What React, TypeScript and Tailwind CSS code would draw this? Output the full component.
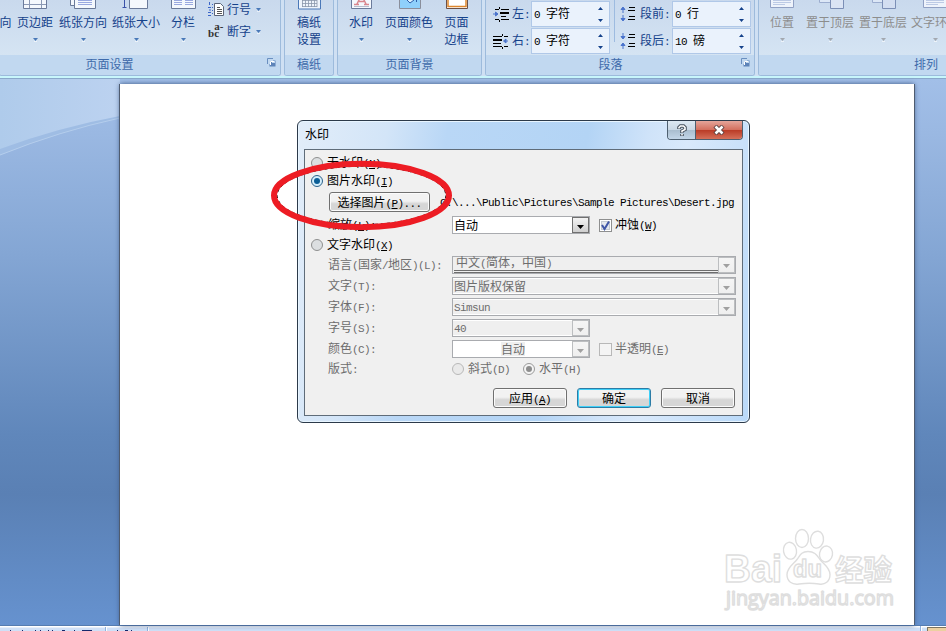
import { Fragment } from 'react'
import clsx from 'clsx'

const CJK = "font-['Liberation_Sans','Noto_Sans_CJK_SC',sans-serif]"

interface TxtProps {
  children: string
  hot?: string
}

function Txt({ children, hot }: TxtProps) {
  const runs = children.split(/([\x20-\x7e]+)/).filter(Boolean)
  return (
    <span className="inline-block whitespace-pre pt-px">
      {runs.map((run, i) =>
        /^[\x20-\x7e]/.test(run) ? (
          <span key={i} className="font-['Liberation_Mono',monospace] text-[11px] tracking-[-0.6px]">
            {hot && run.includes(hot)
              ? run.split(hot).map((part, j) => (
                  <Fragment key={j}>
                    {j > 0 && <span className="underline underline-offset-1">{hot}</span>}
                    {part}
                  </Fragment>
                ))
              : run}
          </span>
        ) : (
          <Fragment key={i}>{run}</Fragment>
        )
      )}
    </span>
  )
}

//-----------Ribbon--------------------------------------------------------

function Caret({ color = '#4878b8' }: { color?: string }) {
  return (
    <svg width="5" height="4" viewBox="0 0 5 4" className="shrink-0">
      <path d="M0 0h5L2.500 3z" fill={color} />
      <path d="M1 3.500h3" stroke="#fff" strokeWidth="0.6" />
    </svg>
  )
}

type IconKind =
  | 'none' | 'margins' | 'orient' | 'size' | 'columns' | 'grid'
  | 'watermark' | 'color' | 'border' | 'pos' | 'front' | 'back'

function RibbonIcon({ kind }: { kind: IconKind }) {
  const page = { fill: '#f4f8fd', stroke: '#6b7b9b' }
  return (
    <svg width="32" height="10" viewBox="0 0 32 10" className="shrink-0">
      {kind === 'margins' && (
        <>
          <path d="M4.500-2v10.500h23v-10.500z" {...page} />
          <path d="M10.500 0v8M22.500 0v8M5 4.500h22" stroke="#8b99b5" />
        </>
      )}
      {kind === 'orient' && (
        <>
          <path d="M3.500-2v7.500h8v-7.500z" {...page} />
          <path d="M7.500-2v10.500h21v-10.500z" {...page} />
          <path d="M11 .5h14M11 2.500h14M11 4.500h14" stroke="#9aa9e0" />
        </>
      )}
      {kind === 'size' && (
        <>
          <path d="M9.500-2v10.500h18v-10.500z" {...page} />
          <path d="M4.500 0v7M2.500 7.500h4" stroke="#3951a8" />
        </>
      )}
      {kind === 'columns' && (
        <>
          <path d="M4.500-2v10.500h24v-10.500z" {...page} />
          <path d="M7 .5h8M18 .5h8M7 2.500h8M18 2.500h8M7 4.500h8M18 4.500h8" stroke="#9aa9e0" />
        </>
      )}
      {kind === 'grid' && (
        <>
          <path d="M5.500-2v11h22v-11z" fill="#eef4fc" stroke="#4a78b8" />
          <path d="M9 .5h15M9 3.500h15M9 6.500h15M9.500 0v7M12.500 0v7M15.500 0v7M18.500 0v7M21.500 0v7M24 0v7" stroke="#8a97ab" strokeWidth=".8" />
        </>
      )}
      {kind === 'watermark' && (
        <>
          <path d="M6.500-2v10.500h20v-10.500z" {...page} />
          <path d="M9 4.500h5M19 4.500h5M12 4l2.500-5M14 1.500h5M18.500-1L21 4" stroke="#d9878e" strokeWidth="1.500" fill="none" />
          <path d="M9 6.500h15" stroke="#b6bccb" />
        </>
      )}
      {kind === 'color' && (
        <>
          <path d="M6.500-2v10.500h21v-10.500z" fill="#8fd0fb" stroke="#8a8f9c" />
          <path d="M14 0l3 3 4-3M23.500 0v2" fill="#d5efff" stroke="#2d5da8" />
        </>
      )}
      {kind === 'border' && (
        <>
          <path d="M5.500-2v10.500h21v-10.500z" fill="#fff" stroke="#6c5148" />
          <path d="M7-2v8.500h18v-8.500z" fill="#fff" stroke="#dd862c" strokeWidth="1.500" />
        </>
      )}
      {kind === 'pos' && (
        <>
          <path d="M4.500-2v9.500h23v-9.500z" fill="#eef3fb" stroke="#91a1c4" />
          <path d="M7 .5h18M7 2.500h18M7 4.500h12" stroke="#bccae5" />
        </>
      )}
      {kind === 'front' && (
        <>
          <path d="M5.500-2v4.500h15v-4.500z" fill="#dce7f6" stroke="#9cadcf" />
          <path d="M16.500-2v10.500h13v-10.500z" fill="#dbe4f4" stroke="#7c8fb6" />
        </>
      )}
      {kind === 'back' && (
        <>
          <path d="M5.500-2v4.500h10v-4.500z" fill="#dce7f6" stroke="#9cadcf" />
          <path d="M15.500-2v10.500h13v-10.500z" fill="#d3def1" stroke="#7c8fb6" />
        </>
      )}
    </svg>
  )
}

interface BigButtonProps {
  width: string
  icon: IconKind
  label: string
  second?: string
  disabled?: boolean
  caret?: boolean
}

function BigButton({ width, icon, label, second, disabled, caret = true }: BigButtonProps) {
  return (
    <div className={clsx('flex shrink-0 flex-col items-center', width, disabled ? 'text-[#8d8d8d]' : 'text-[#15428b]')}>
      <RibbonIcon kind={icon} />
      <span className="mt-[5px] h-[17px] whitespace-nowrap leading-[17px]">{label}</span>
      {second && <span className="whitespace-nowrap leading-[17px]">{second}</span>}
      {!second && caret && (
        <span className="mt-[6px] flex">
          <Caret color={disabled ? '#a3a8b0' : undefined} />
        </span>
      )}
    </div>
  )
}

interface GroupProps {
  width: string
  title: string
  launcher?: boolean
  titleShift?: string
  children: React.ReactNode
}

function Group({ width, title, launcher, titleShift, children }: GroupProps) {
  return (
    <section className={clsx('flex h-[76px] shrink-0 flex-col overflow-hidden rounded-b-[3px] border border-t-0 border-[#9dbbdc] bg-gradient-to-b from-[#c9d9ed] to-[#d9e8f5]', width)}>
      <div className="flex h-[55px] shrink-0">{children}</div>
      <div className="flex flex-1 items-center bg-[#c1d8f0] text-[#3e6aaa]">
        <span className={clsx('flex-1 text-center', titleShift)}>{title}</span>
        {launcher && (
          <svg width="9" height="9" viewBox="0 0 9 9" className="-mt-[6px] mr-1">
            <path d="M.5 6V.5H6" fill="none" stroke="#6a8fc0" />
            <path d="M3 3h2v2h3V3h-2V2.500h2.500v6h-6V6H3z" fill="#5d83b8" />
            <path d="M3.500 7V3.500H7" stroke="#fff" fill="none" />
          </svg>
        )}
      </div>
    </section>
  )
}

function Spinner({ value }: { value: string }) {
  return (
    <div className="flex h-[26px] w-[79px] items-center justify-between border border-[#b0c8e8] bg-[#eaf2fc] pl-[2px] pr-[6px] text-black">
      <Txt>{value}</Txt>
      <svg width="5" height="15" viewBox="0 0 5 15">
        <path d="M0 3h5L2.500 0zM0 12h5l-2.500 3z" fill="#15428b" />
      </svg>
    </div>
  )
}

function IndentIcon({ right }: { right?: boolean }) {
  return (
    <svg width="16" height="15" viewBox="0 0 16 15" className="shrink-0">
      {right ? (
        <>
          <path d="M0 2.500h9M0 9.500h8M0 12.500h9M11 12.500h4M11 2.500h4" stroke="#000" />
          <path d="M0 6h9" stroke="#000" strokeWidth="2" />
          <path d="M9.500 0v2M9.500 13v2" stroke="#000" />
          <path d="M15 7h-3M13 5L10.500 7 13 9z" fill="#4b74cd" stroke="#4b74cd" />
        </>
      ) : (
        <>
          <path d="M2 2.500h4M8 2.500h8M8 9.500h5M2 12.500h4M8 12.500h8" stroke="#000" />
          <path d="M7 6h9" stroke="#000" strokeWidth="2" />
          <path d="M6.500 0v2M6.500 13v2" stroke="#000" />
          <path d="M0 7h3M2.500 5L5 7 2.500 9z" fill="#4b74cd" stroke="#4b74cd" />
        </>
      )}
    </svg>
  )
}

function SpacingIcon({ after }: { after?: boolean }) {
  return (
    <svg width="16" height="16" viewBox="0 0 16 16" className="shrink-0">
      <path d="M9 1.500h6M8 4.500h7M9 10.500h6M8 13.500h7" stroke="#000" />
      {after ? (
        <path d="M3 0v3M1 3.500L3 6l2-2.500zM3 13v3M1 12.500L3 10l2 2.500z" fill="#4b74cd" stroke="#4b74cd" />
      ) : (
        <path d="M3 3v4M1 3.500L3 1l2 2.500zM3 9v4M1 12.500L3 15l2-2.500z" fill="#4b74cd" stroke="#4b74cd" />
      )}
    </svg>
  )
}

function Ribbon() {
  return (
    <header className="flex h-[79px] shrink-0 flex-col overflow-hidden bg-[#cfe0f3]">
      <div className="flex h-[76px] gap-[3px]">
        <Group width="w-[282px] -ml-px" title="页面设置" launcher titleShift="-ml-[48px]">
          <BigButton width="w-[11px] overflow-hidden" icon="none" label="向" caret={false} />
          <BigButton width="w-12" icon="margins" label="页边距" />
          <BigButton width="w-12" icon="orient" label="纸张方向" />
          <BigButton width="w-[58px]" icon="size" label="纸张大小" />
          <BigButton width="w-9" icon="columns" label="分栏" />
          <div className="flex flex-col pl-[7px] text-[#15428b]">
            <div className="flex h-[19px] items-center">
              <svg width="17" height="15" viewBox="0 0 17 15" className="mr-[2px]">
                <path d="M6.500 1.500h6l3 3v9h-9z" fill="#fff" stroke="#5b6478" />
                <path d="M9 5.500h3M9 7.500h5M9 9.500h5M9 11.500h5" stroke="#555" />
                <path d="M1.500 0v3M0 5.500h3M1 8h2M0 10.500h3M0 13.500h3" stroke="#3a64c8" />
                <path d="M4.500 2v12" stroke="#3a64c8" strokeDasharray="1 2" />
              </svg>
              行号
              <span className="ml-[5px] flex"><Caret /></span>
            </div>
            <div className="flex h-[25px] items-center">
              <span className="mr-[2px] flex h-[13px] w-[17px] items-end font-['Liberation_Serif',serif] text-[11px] font-bold text-[#333]">
                <span className="leading-[9px]">b</span>
                <span className="flex flex-col text-[11px] leading-[6px]">
                  <span>a-</span>
                  <span className="leading-[9px]">c</span>
                </span>
              </span>
              断字
              <span className="ml-[5px] flex"><Caret /></span>
            </div>
          </div>
        </Group>
        <Group width="w-[50px]" title="稿纸">
          <BigButton width="w-12" icon="grid" label="稿纸" second="设置" />
        </Group>
        <Group width="w-[145px]" title="页面背景">
          <BigButton width="w-[46px]" icon="watermark" label="水印" />
          <BigButton width="w-[50px]" icon="color" label="页面颜色" />
          <BigButton width="w-[45px]" icon="border" label="页面" second="边框" />
        </Group>
        <Group width="w-[270px]" title="段落" launcher titleShift="-ml-[6px]">
          <div className="grid h-[54px] grid-cols-[19px_19px_80px] content-start items-center gap-y-px pl-[7px] pt-px text-[#15428b]">
            <IndentIcon />
            <Txt>左:</Txt>
            <Spinner value="0 字符" />
            <IndentIcon right />
            <Txt>右:</Txt>
            <Spinner value="0 字符" />
          </div>
          <div className="ml-[3px] h-[42px] w-px bg-[#9dbbe0]" />
          <div className="grid h-[54px] grid-cols-[20px_32px_79px] content-start items-center gap-y-px pl-[5px] pt-px text-[#15428b]">
            <SpacingIcon />
            <Txt>段前:</Txt>
            <Spinner value="0 行" />
            <SpacingIcon after />
            <Txt>段后:</Txt>
            <Spinner value="10 磅" />
          </div>
        </Group>
        <Group width="w-[336px]" title="排列">
          <BigButton width="w-[46px]" icon="pos" label="位置" disabled />
          <BigButton width="w-[50px]" icon="front" label="置于顶层" disabled />
          <BigButton width="w-[56px]" icon="back" label="置于底层" disabled />
          <BigButton width="w-[48px]" icon="pos" label="文字环绕" disabled />
        </Group>
      </div>
      <div className="h-[2px] bg-[#c8f6fb]" />
      <div className="h-px bg-[#8aa8ca]" />
    </header>
  )
}

//-----------Dialog--------------------------------------------------------

function Radio({ on, disabled }: { on?: boolean; disabled?: boolean }) {
  return (
    <span className={clsx('flex size-3 shrink-0 items-center justify-center rounded-full border', on && !disabled ? 'border-[#2c628b] bg-[#d4eefb]' : disabled ? (on ? 'border-[#9a9a9a] bg-[#f4f4f4]' : 'border-[#b8b8b8] bg-[#e9e9e9]') : 'border-[#8e8f8f] bg-[#dcdfe1]')}>
      {on && <span className={clsx('size-1.5 rounded-full', disabled ? 'bg-[#8d8d8d]' : 'bg-[#0b5e96]')} />}
    </span>
  )
}

interface ComboProps {
  wide?: boolean
  value: string
  enabled?: boolean
  variant?: 'link' | 'center'
}

function Combo({ wide, value, enabled, variant }: ComboProps) {
  return (
    <div className={clsx('flex h-[18px] shrink-0 border border-[#a9abaf]', wide ? 'w-[284px]' : 'w-[138px]', enabled ? 'bg-white text-black' : 'bg-[#efefef] text-[#6d6d6d]', variant === 'center' && 'bg-white')}>
      <div className={clsx('flex min-w-0 flex-1 items-center pl-px', !enabled && !variant && 'border-y border-white', variant === 'center' && 'justify-center')}>
        {variant === 'link' ? (
          <span className="flex h-4 w-full items-center border-b-[3px] border-double border-[#6d6d6d] pl-[2px]">
            <Txt>{value}</Txt>
          </span>
        ) : variant === 'center' ? (
          <span className="flex h-[14px] items-center bg-[#efefef]"><Txt>{value}</Txt></span>
        ) : (
          <Txt>{value}</Txt>
        )}
      </div>
      <div className={clsx('flex w-[17px] items-center justify-center border bg-gradient-to-b', enabled ? 'border-[#707070] from-[#f3f3f3] to-[#cfcfcf]' : 'border-[#bcbec0] from-[#f5f5f5] to-[#efefef]')}>
        <svg width="7" height="4" viewBox="0 0 7 4" className="mt-[3px]">
          <path d="M0 0h7L3.500 4z" fill={enabled ? '#000' : '#a0a0a0'} />
        </svg>
      </div>
    </div>
  )
}

function PushButton({ label, hot, primary, width = 'w-[74px]' }: { label: string; hot?: string; primary?: boolean; width?: string }) {
  return (
    <button className={clsx('flex h-5 shrink-0 items-center justify-center rounded-[3px] border bg-gradient-to-b from-[#f2f2f2] from-45% to-[#d6d6d6] to-60% pt-px text-black', width, primary ? 'border-[#2c7ca6] shadow-[inset_0_0_0_1px_#3fd0f8]' : 'border-[#707070] shadow-[inset_0_0_0_1px_#fbfbfb]')}>
      <Txt hot={hot}>{label}</Txt>
    </button>
  )
}

function RadioRow({ height, label, hot, on }: { height: string; label: string; hot: string; on?: boolean }) {
  return (
    <div className={clsx('flex items-center gap-1 pl-[6px]', height)}>
      <Radio on={on} />
      <Txt hot={hot}>{label}</Txt>
    </div>
  )
}

function FieldRow({ height, label, children }: { height: string; label: string; children: React.ReactNode }) {
  return (
    <div className={clsx('flex items-center text-[#6d6d6d]', height)}>
      <div className="w-[147px] shrink-0 pl-[23px]"><Txt>{label}</Txt></div>
      {children}
    </div>
  )
}

function Checkbox({ checked }: { checked?: boolean }) {
  return (
    <svg width="13" height="13" viewBox="0 0 13 13" className="ml-[9px] mr-[3px] shrink-0">
      <rect x=".5" y=".5" width="12" height="12" fill={checked ? '#fff' : '#f4f4f4'} stroke={checked ? '#8e8f8f' : '#b8b8b8'} />
      {checked && <rect x="2.500" y="2.500" width="8" height="8" fill="#e4e8ee" stroke="#c4cad2" />}
      {checked && <path d="M3 6l2.500 4L10 2.500" fill="none" stroke="#3f56a6" strokeWidth="2" />}
    </svg>
  )
}

function WatermarkDialog() {
  return (
    <div className="absolute left-[297px] top-[120px] flex h-[303px] w-[453px] flex-col rounded-[6px] border border-[#2c3a4a] bg-[linear-gradient(100deg,#e2edf9_0%,#d3e5f8_18%,#b9d7f6_30%,#b3d4f5_58%,#cfe3f9_70%,#d9e9fb_78%,#b9d9f9_100%)] shadow-[inset_0_0_0_1px_#e8f5ff]">
      <div className="flex h-[28px] shrink-0 justify-between">
        <span className="pl-[7px] pt-[6px] text-black">水印</span>
        <div className="mr-[6px] flex h-[19px] overflow-hidden rounded-b-[4px] border border-t-0 border-[#4e6070]">
          <div className="flex w-7 items-center justify-center border-r border-[#4e6070] bg-[linear-gradient(#dde8f2_0%,#cad8e5_48%,#a9bdce_50%,#c3d6e8_100%)]">
            <svg width="10" height="13" viewBox="0 0 10 13" fill="none">
              <path d="M2 5V3.500L3.500 2h3L8 3.500v2L5 7v2M5 10v2" stroke="#46505c" strokeWidth="3.600" />
              <path d="M2 4.500V3.500L3.500 2h3L8 3.500v2L5 7v1.500M5 10v1.500" stroke="#fff" strokeWidth="1.600" />
            </svg>
          </div>
          <div className="flex w-[46px] items-center justify-center bg-[linear-gradient(#e5a59a_0%,#d4705f_48%,#b93a25_50%,#d5705a_100%)]">
            <svg width="12" height="10" viewBox="0 0 12 10" fill="none">
              <path d="M2 1l8 8M10 1L2 9" stroke="#5a4040" strokeWidth="4.400" />
              <path d="M2.500 1.500l7 7M9.500 1.500l-7 7" stroke="#fff" strokeWidth="2.600" />
            </svg>
          </div>
        </div>
      </div>
      <div className="mx-[6px] h-[267px] border border-[#5f6c79] bg-[#f0f0f0] pt-1 text-black">
        <RadioRow height="h-[18px]" label="无水印(N)" hot="N" />
        <RadioRow height="h-[18px]" label="图片水印(I)" hot="I" on />
        <div className="flex h-6 items-center pl-6">
          <PushButton width="w-[101px]" label="选择图片(P)..." hot="P" />
          <span className="ml-[10px]"><Txt>{'C:\\...\\Public\\Pictures\\Sample Pictures\\Desert.jpg'}</Txt></span>
        </div>
        <div className="flex h-[22px] items-center">
          <div className="w-[147px] shrink-0 pl-[23px]"><Txt hot="L">缩放(L):</Txt></div>
          <Combo value="自动" enabled />
          <Checkbox checked />
          <Txt hot="W">冲蚀(W)</Txt>
        </div>
        <RadioRow height="h-[18px]" label="文字水印(X)" hot="X" />
        <FieldRow height="h-[21px]" label="语言(国家/地区)(L):">
          <Combo wide value="中文(简体，中国)" variant="link" />
        </FieldRow>
        <FieldRow height="h-[22px]" label="文字(T):">
          <Combo wide value="图片版权保留" />
        </FieldRow>
        <FieldRow height="h-5" label="字体(F):">
          <Combo wide value="Simsun" />
        </FieldRow>
        <FieldRow height="h-[22px]" label="字号(S):">
          <Combo value="40" />
        </FieldRow>
        <FieldRow height="h-5" label="颜色(C):">
          <Combo value="自动" variant="center" />
          <Checkbox />
          <Txt hot="E">半透明(E)</Txt>
        </FieldRow>
        <FieldRow height="h-5" label="版式:">
          <span className="flex items-center gap-1">
            <Radio disabled />
            <Txt>斜式(D)</Txt>
            <span className="w-[5px]" />
            <Radio on disabled />
            <Txt>水平(H)</Txt>
          </span>
        </FieldRow>
        <div className="mr-[7px] mt-[9px] flex justify-end gap-[10px]">
          <PushButton label="应用(A)" hot="A" />
          <PushButton label="确定" primary />
          <PushButton label="取消" />
        </div>
      </div>
    </div>
  )
}

//-----------Workspace--------------------------------------------------------

function BaiduMark() {
  return (
    <svg width="180" height="86" viewBox="0 0 180 86" className="absolute left-[720px] top-[526px]" fill="#fff" stroke="#dedede" strokeWidth="1.400" strokeLinejoin="round">
      <text x="4" y="56" fontSize="39" fontWeight="700" textLength="58" lengthAdjust="spacingAndGlyphs" fontFamily="Liberation Sans, sans-serif">Bai</text>
      <ellipse cx="70" cy="24.700" rx="6.500" ry="8.500" transform="rotate(-10 70 24.700)" />
      <ellipse cx="82" cy="12.500" rx="6.500" ry="9" />
      <ellipse cx="97" cy="13.700" rx="6.500" ry="8.500" transform="rotate(8 97 13.700)" />
      <ellipse cx="106" cy="28" rx="6.500" ry="8" transform="rotate(10 106 28)" />
      <path d="M88 25.500c7 0 9 4 12 8s10 8 10 15-5 10.500-11 9.500-13-1-20 0-12-2.500-12-9.500 7-11 10-15 4-8 11-8z" />
      <text x="73" y="51" fontSize="23" textLength="29" lengthAdjust="spacingAndGlyphs" fontWeight="700" fontFamily="Liberation Sans, sans-serif">du</text>
      <text x="115" y="55" fontSize="29" fontWeight="700" textLength="57" lengthAdjust="spacingAndGlyphs" fontFamily="Noto Sans CJK SC, sans-serif">经验</text>
      <text x="6" y="79" fontSize="20" textLength="168" lengthAdjust="spacingAndGlyphs" fontFamily="Open Sans, sans-serif">jingyan.baidu.com</text>
    </svg>
  )
}

function Swoosh() {
  return (
    <svg width="120" height="100" viewBox="0 0 120 100" className="absolute left-0 top-[79px]">
      <defs>
        <linearGradient id="sw" x1="0" x2="1">
          <stop offset="0" stopColor="#afcbeb" />
          <stop offset="1" stopColor="#bcd2f0" />
        </linearGradient>
      </defs>
      <path d="M0 0h120v38Q60 52 0 76z" fill="url(#sw)" />
      <path d="M0 70Q60 48 120 37v2Q60 52 0 76z" fill="#9fbde4" />
      <path d="M0 76Q60 52 120 39" fill="none" stroke="#b4cdec" />
    </svg>
  )
}

// [x, width] of the glyph tops peeking over the lower edge
const glyphTops = [
  [10, 1], [22, 1], [35, 1], [40, 1], [48, 1], [52, 1], [62, 3], [74, 1],
  [82, 10], [117, 1], [125, 3], [131, 1],
]

function StatusBar() {
  return (
    <footer className="flex h-[6px] shrink-0 border-t border-[#567db1] bg-gradient-to-b from-white from-20% to-[#cfe0f7] to-40%">
      <svg width="946" height="5" viewBox="0 0 946 5">
        {glyphTops.map(([x, w]) => (
          <rect key={x} x={x} y="4" width={w} height="1" fill="#15286b" />
        ))}
        <path d="M105.500 1v4M147.500 1v4M920.500 0v5" stroke="#8fb1de" />
        <path d="M106.500 1v4M148.500 1v4M921.500 0v5" stroke="#fff" />
        <path d="M927 1h19v4h-19z" fill="#7d7460" />
        <path d="M928 2h18v3h-18z" fill="#ecd0a0" />
      </svg>
    </footer>
  )
}

export default function App() {
  return (
    <div className={clsx('relative flex h-[631px] w-[946px] flex-col overflow-hidden text-[12px] leading-[16px]', CJK)}>
      <Ribbon />
      <main className="flex min-h-0 flex-1 bg-[linear-gradient(#a2bfe8_0%,#9ab8e2_10%,#84a6d4_32%,#6087bb_65%,#5a80b4_76%,#6692cf_100%)] pt-[5px]">
        <Swoosh />
        <div className="relative ml-[120px] w-[794px] bg-white shadow-[-1px_0_0_#4f5c70,1px_0_0_#4f5c70,0_0_5px_#3a5480]" />
      </main>
      <StatusBar />
      <BaiduMark />
      <WatermarkDialog />
      {/* Red pen mark round the picture option */}
      <svg width="190" height="80" viewBox="0 0 190 80" className="absolute left-[267px] top-[156px]" fill="none">
        <ellipse cx="94.500" cy="39.500" rx="84.300" ry="29.200" stroke="#000" strokeWidth="1" strokeDasharray="3 3" />
        <ellipse cx="94.500" cy="39.500" rx="87.500" ry="31.700" stroke="#ed1c24" strokeWidth="6" />
      </svg>
    </div>
  )
}
